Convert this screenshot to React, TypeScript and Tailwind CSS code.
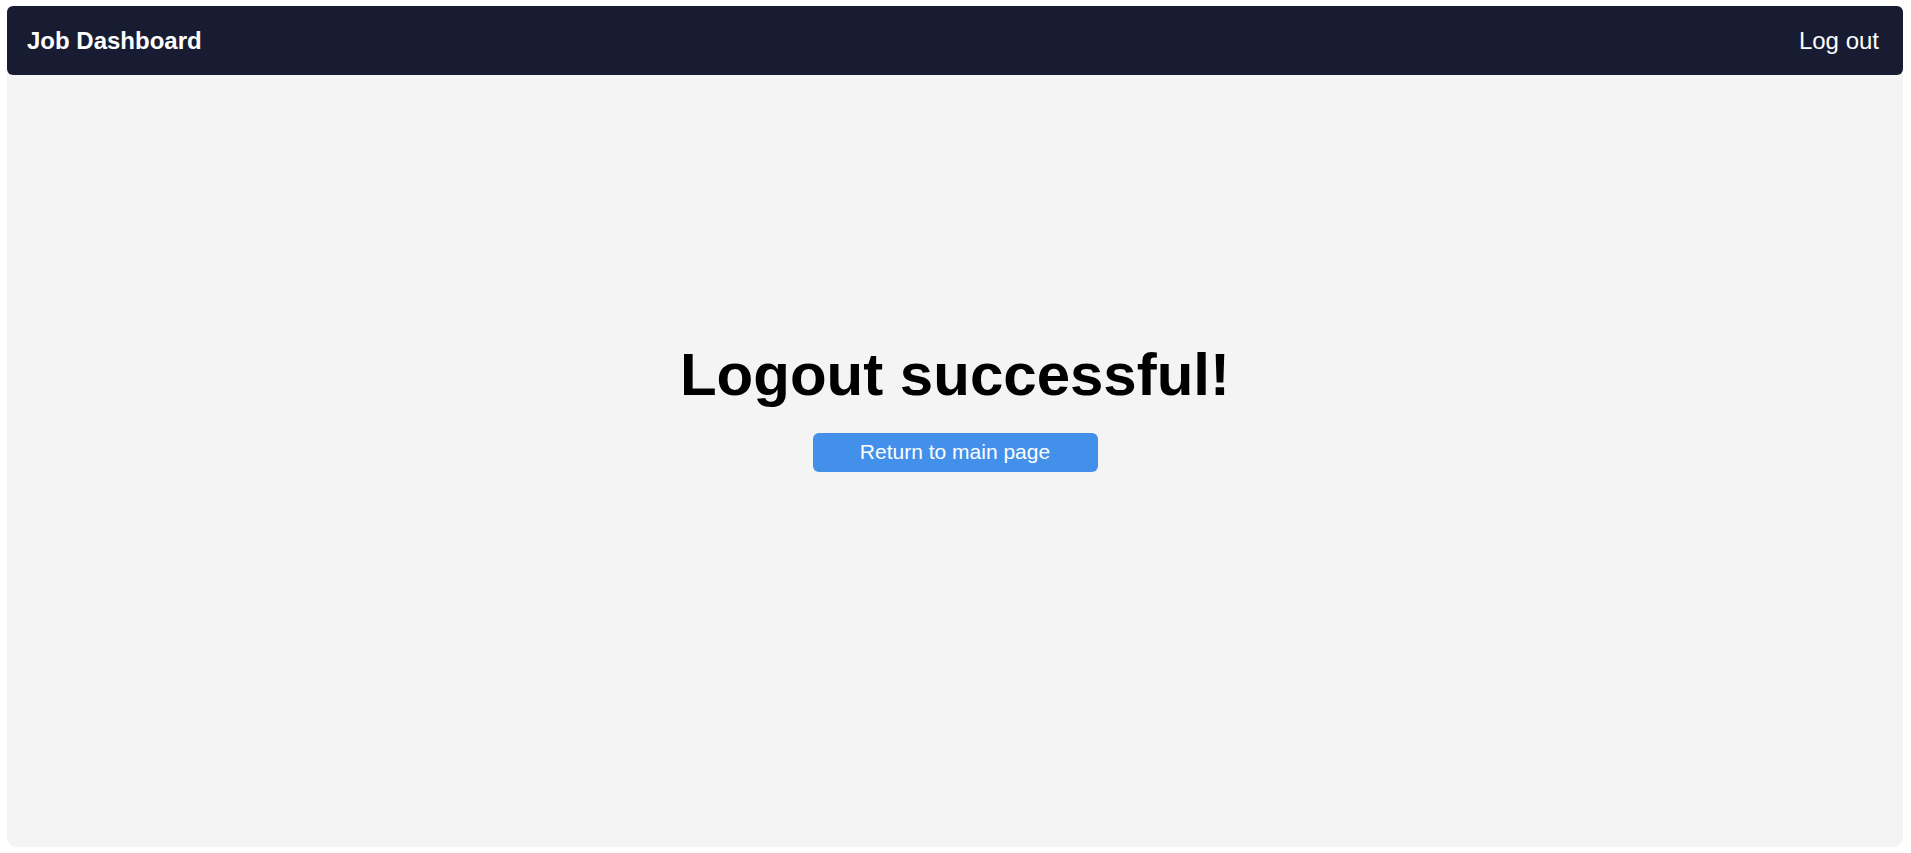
export default function App() {
  return (
    <div
      className="h-[853px] bg-white pl-[7px] pr-[8px] py-[6px]"
      style={{ fontFamily: '"Liberation Sans", Arial, sans-serif' }}
    >
      <div className="flex h-full flex-col rounded-[10px] bg-[#f4f4f4]">
        <header className="flex h-[69px] flex-none items-center justify-between rounded-md bg-[#181c32] pl-5 pr-[24px] text-white">
          <span className="text-2xl font-bold">Job Dashboard</span>
          <button type="button" className="text-2xl">
            Log out
          </button>
        </header>
        <main className="flex flex-1 flex-col items-center justify-center pb-[106px]">
          <h1 className="text-[60px] font-bold leading-none text-black">
            Logout successful!
          </h1>
          <button
            type="button"
            className="mt-[28px] h-[39px] w-[285px] rounded-md bg-[#4390ea] text-[21px] text-white"
          >
            Return to main page
          </button>
        </main>
      </div>
    </div>
  );
}
